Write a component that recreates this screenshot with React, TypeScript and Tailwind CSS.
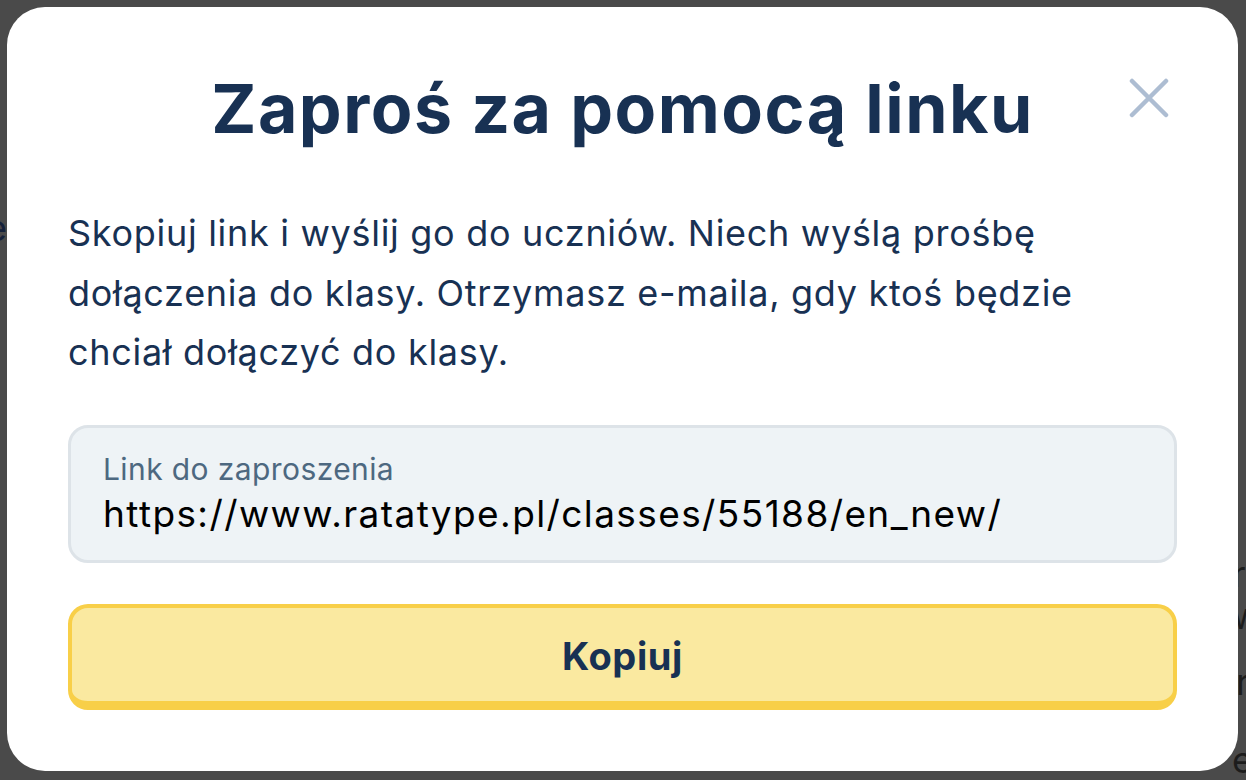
import React from "react";

const font = { fontFamily: "Inter, 'Noto Sans', sans-serif" };

const App: React.FC = () => {
  return (
    <div className="relative h-[780px] w-full overflow-hidden bg-[#4a4a4a]" style={font}>
      {/* page behind the overlay, only its edges show */}
      <div className="flex h-full justify-between text-[36px] leading-[44px]">
        <div className="ml-[-14px] pt-[206px] text-[#14213a]">e</div>
        <div className="mr-[-14px] flex w-[28px] flex-col pt-[552px] text-[#1c1c1c]">
          <span>re</span>
          <span className="mt-[-2px]">w</span>
          <span className="mt-[22px] pl-[4px]">r</span>
          <span className="mt-[34px]">e</span>
        </div>
      </div>

      {/* modal overlay */}
      <div className="absolute inset-0 flex pb-[9px] pl-[7px] pr-[8px] pt-[7px]">
        <div className="flex-1 rounded-[38px] bg-white px-[61px] pt-[55px]">
          <div className="relative flex justify-center">
            <h2 className="text-[68px] font-bold leading-[92px] tracking-[1.5px] text-[#183153]">
              Zaproś za pomocą linku
            </h2>
            <button className="absolute right-[8px] top-[16px] text-[#adbdd2]" aria-label="Zamknij">
              <svg width="40" height="40" viewBox="0 0 40 40" fill="none">
                <path d="M3 3 L37 37 M37 3 L3 37" stroke="currentColor" strokeWidth="4.5" strokeLinecap="round" />
              </svg>
            </button>
          </div>

          <p className="mt-[50px] text-[36px] leading-[59.5px] tracking-[0.7px] text-[#183153]">
            Skopiuj link i wyślij go do uczniów. Niech wyślą prośbę dołączenia do klasy. Otrzymasz e-maila, gdy ktoś będzie chciał dołączyć do klasy.
          </p>

          <div className="mt-[42px] flex h-[138px] flex-col justify-center rounded-[20px] border-[3px] border-[#dde3e8] bg-[#eef3f6] px-[32px]">
            <span className="text-[30px] leading-[36px] tracking-[0.4px] text-[#4d6880]">Link do zaproszenia</span>
            <span className="mt-[4px] text-[37px] leading-[46px] tracking-[1.4px] text-black">
              https://www.ratatype.pl/classes/55188/en_new/
            </span>
          </div>

          <button className="mt-[41px] flex h-[106px] w-full items-center justify-center rounded-[20px] border-[4px] border-b-[9px] border-[#f8cf48] bg-[#fae9a0] pt-[4px] text-[38px] font-bold tracking-[0.6px] text-[#183153]">
            Kopiuj
          </button>
        </div>
      </div>
    </div>
  );
};

export default App;
